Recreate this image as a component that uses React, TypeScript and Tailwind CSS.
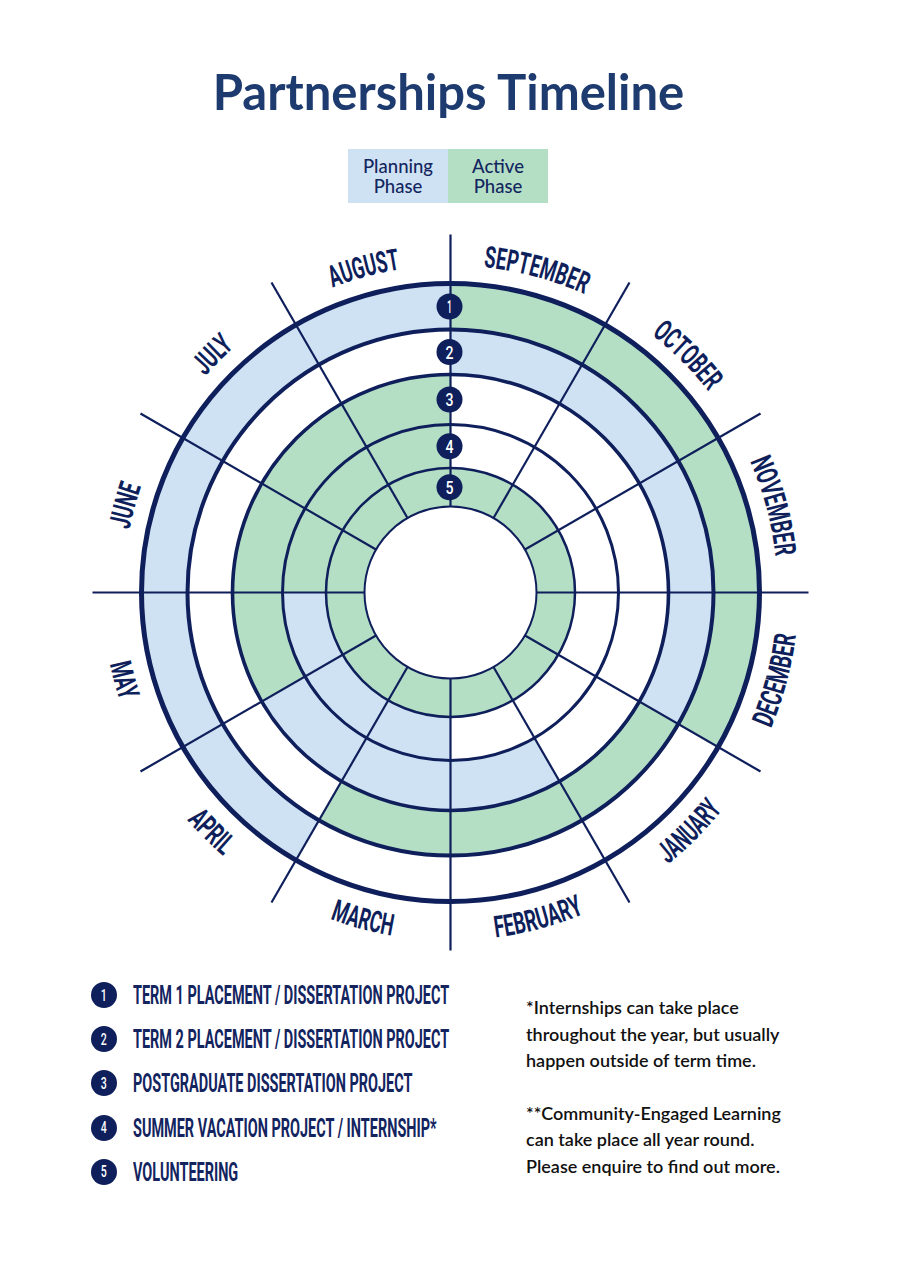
import React from 'react';

const NAVY = '#0e1f5b';
const BLUE = '#cfe2f3';
const GREEN = '#b5dfc5';

// chart geometry (svg coordinates, svg sits at page y = 222)
const CX = 450.5;
const CY = 370.5;
const RADII = [309, 263, 218, 168, 124.5, 86];
const STROKES = [5, 4, 3.6, 3, 2.5, 2];

// ring colours per month, starting at September (top, clockwise)
const RINGS = [
  'GGGGWWWBBBBB',
  'BBBBGGGWWWWW',
  'WWWWWBBBGGGG',
  'WWWWWWBBBGGG',
  'GGGGGGGGGGGG',
];

const MONTHS = [
  { name: 'SEPTEMBER', len: 105 },
  { name: 'OCTOBER', len: 81 },
  { name: 'NOVEMBER', len: 99 },
  { name: 'DECEMBER', len: 97 },
  { name: 'JANUARY', len: 77 },
  { name: 'FEBRUARY', len: 92 },
  { name: 'MARCH', len: 64 },
  { name: 'APRIL', len: 51 },
  { name: 'MAY', len: 38 },
  { name: 'JUNE', len: 45 },
  { name: 'JULY', len: 41 },
  { name: 'AUGUST', len: 70 },
];

const ITEMS = [
  'TERM 1 PLACEMENT / DISSERTATION PROJECT',
  'TERM 2 PLACEMENT / DISSERTATION PROJECT',
  'POSTGRADUATE DISSERTATION PROJECT',
  'SUMMER VACATION PROJECT / INTERNSHIP*',
  'VOLUNTEERING',
];

function pt(r: number, deg: number): [number, number] {
  const a = (deg * Math.PI) / 180;
  return [CX + r * Math.sin(a), CY - r * Math.cos(a)];
}

function sector(rOut: number, rIn: number, a0: number, a1: number) {
  const [x0, y0] = pt(rOut, a0);
  const [x1, y1] = pt(rOut, a1);
  const [x2, y2] = pt(rIn, a1);
  const [x3, y3] = pt(rIn, a0);
  return `M${x0} ${y0} A${rOut} ${rOut} 0 0 1 ${x1} ${y1} L${x2} ${y2} A${rIn} ${rIn} 0 0 0 ${x3} ${y3} Z`;
}

function labelArc(mid: number, bottom: boolean) {
  const r = bottom ? 348 : 327;
  const a0 = bottom ? mid + 28 : mid - 28;
  const a1 = bottom ? mid - 28 : mid + 28;
  const [x0, y0] = pt(r, a0);
  const [x1, y1] = pt(r, a1);
  return `M${x0} ${y0} A${r} ${r} 0 0 ${bottom ? 0 : 1} ${x1} ${y1}`;
}

function Wheel() {
  return (
    <svg width="905" height="740" viewBox="0 0 905 740" className="block">
      {/* coloured ring segments */}
      {RINGS.map((row, ri) =>
        row.split('').map((c, mi) =>
          c === 'W' ? null : (
            <path
              key={`${ri}-${mi}`}
              d={sector(RADII[ri], RADII[ri + 1], mi * 30, mi * 30 + 30)}
              fill={c === 'G' ? GREEN : BLUE}
            />
          )
        )
      )}

      {/* spokes */}
      {Array.from({ length: 12 }).map((_, i) => {
        const [x0, y0] = pt(86, i * 30);
        const [x1, y1] = pt(358, i * 30);
        return <line key={i} x1={x0} y1={y0} x2={x1} y2={y1} stroke={NAVY} strokeWidth={2.2} />;
      })}

      {/* ring outlines */}
      {RADII.map((r, i) => (
        <circle key={r} cx={CX} cy={CY} r={r} fill={i === 5 ? '#ffffff' : 'none'} stroke={NAVY} strokeWidth={STROKES[i]} />
      ))}

      {/* ring numbers */}
      {[1, 2, 3, 4, 5].map((n, i) => {
        const y = CY - (RADII[i] + RADII[i + 1]) / 2;
        return (
          <g key={n}>
            <circle cx={CX - 1} cy={y} r={13} fill={NAVY} />
            <text
              x={CX - 1}
              y={y + 6.5}
              textAnchor="middle"
              fill="#ffffff"
              fontSize={18}
              fontWeight={500}
              fontFamily="Roboto, sans-serif"
              textLength={n === 1 ? 5 : 8}
              lengthAdjust="spacingAndGlyphs"
            >
              {n}
            </text>
          </g>
        );
      })}

      {/* month labels */}
      <defs>
        {MONTHS.map((m, i) => {
          const mid = i * 30 + 15;
          return <path key={m.name} id={`arc-${i}`} d={labelArc(mid, mid > 90 && mid < 270)} fill="none" />;
        })}
      </defs>
      {MONTHS.map((m, i) => (
        <text
          key={m.name}
          fill={NAVY}
          fontSize={30}
          fontWeight={700}
          fontFamily="Roboto, sans-serif"
        >
          <textPath
            href={`#arc-${i}`}
            startOffset="50%"
            textAnchor="middle"
            textLength={m.len}
            lengthAdjust="spacingAndGlyphs"
          >
            {m.name}
          </textPath>
        </text>
      ))}
    </svg>
  );
}

export default function App() {
  return (
    <div className="w-[905px] h-[1280px] bg-white overflow-hidden">
      {/* Title */}
      <h1 className="pt-[67px] pr-[8px] text-center text-[49px] leading-[49px] font-bold text-[#1e3b6f] font-['Lato',sans-serif]">
        Partnerships Timeline
      </h1>

      {/* Phase legend */}
      <div className="mt-[33px] flex justify-center pr-[9px] font-['Lato',sans-serif] font-medium text-[18.5px] leading-[20px] text-[#13265f]">
        <div className="w-[100px] h-[54px] bg-[#cfe2f3] flex flex-col items-center justify-center text-center">
          <span>Planning</span>
          <span>Phase</span>
        </div>
        <div className="w-[100px] h-[54px] bg-[#b5dfc5] flex flex-col items-center justify-center text-center">
          <span>Active</span>
          <span>Phase</span>
        </div>
      </div>

      {/* Wheel */}
      <div className="mt-[19px]">
        <Wheel />
      </div>

      {/* Key + notes */}
      <div className="mt-[20px] flex pl-[91px]">
        <div className="w-[435px] flex flex-col gap-[18.2px]">
          {ITEMS.map((t, i) => (
            <div key={t} className="h-[26px] flex items-center">
              <div className="w-[26px] h-[26px] rounded-full bg-[#0e1f5b] flex items-center justify-center shrink-0">
                <span className="inline-block scale-x-[0.62] text-white text-[17px] leading-none font-medium font-['Roboto',sans-serif]">
                  {i + 1}
                </span>
              </div>
              <span className="ml-[16px] inline-block origin-left scale-x-[0.556] whitespace-nowrap text-[26px] leading-[26px] font-bold text-[#13245f] font-['Roboto',sans-serif]">
                {t}
              </span>
            </div>
          ))}
        </div>
        <div className="mt-[12px] font-['Lato',sans-serif] font-semibold text-[18px] leading-[26.5px] text-[#111111]">
          <p>
            *Internships can take place
            <br />
            throughout the year, but usually
            <br />
            happen outside of term time.
          </p>
          <p className="mt-[26px]">
            **Community-Engaged Learning
            <br />
            can take place all year round.
            <br />
            Please enquire to find out more.
          </p>
        </div>
      </div>
    </div>
  );
}
